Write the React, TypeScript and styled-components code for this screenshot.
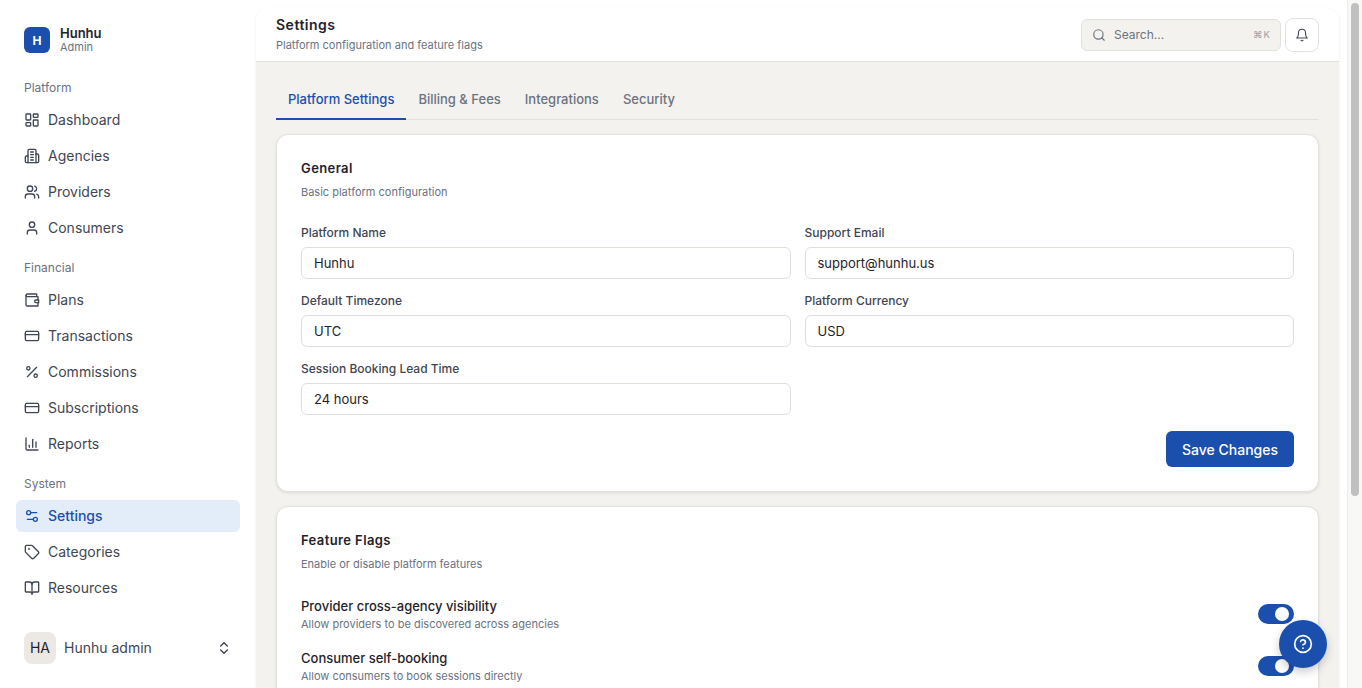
import React from 'react';
import styled, { createGlobalStyle } from 'styled-components';
import { LayoutDashboard, Users, User, CreditCard, Percent, ChartColumn, Settings2, Tag, BookOpen, ChevronsUpDown, Search, CircleHelp } from 'lucide-react';

const Global = createGlobalStyle`
  html, body { margin: 0; padding: 0; height: 688px; overflow: hidden; background: #fff; font-family: Inter, sans-serif; color: #1f2329; }
  #root { height: 688px; }
  * { box-sizing: border-box; }
`;
const Page = styled.div`display: flex; height: 688px; width: 1362px; overflow: hidden; position: relative;`;
const Sidebar = styled.aside`width: 256px; flex: none; background: #fff; padding: 16px 16px 0; display: flex; flex-direction: column; height: 688px;`;
const Brand = styled.div`display: flex; align-items: center; gap: 10px; padding: 8px; height: 48px; margin-bottom: 8px;`;
const Logo = styled.div`width: 26px; height: 26px; border-radius: 6px; background: #1b4fae; color: #fff; display: flex; align-items: center; justify-content: center; font-size: 12px; font-weight: 700;`;
const BrandText = styled.div`display: flex; flex-direction: column;`;
const BrandName = styled.div`font-size: 13px; font-weight: 600; line-height: 14px;`;
const BrandRole = styled.div`font-size: 11px; color: #6b7280; line-height: 14px;`;
const Group = styled.div`font-size: 12px; line-height: 16px; color: #6b7280; height: 32px; padding: 0 8px; display: flex; align-items: center;`;
const Item = styled.div<{ $active?: boolean }>`height: 32px; margin-bottom: 4px; padding: 0 8px; display: flex; align-items: center; gap: 8px; border-radius: 6px; font-size: 14px; line-height: 20px; width: 224px;
  background: ${p => p.$active ? '#e3edf9' : 'transparent'}; color: ${p => p.$active ? '#1b4fae' : '#3f4654'}; font-weight: ${p => p.$active ? 500 : 400};
  svg { width: 16px; height: 16px; stroke-width: 2; flex: none; }`;
const Section = styled.div`margin-bottom: 4px;`;
const UserRow = styled.div`margin-top: auto; margin-bottom: 24px; display: flex; align-items: center; gap: 8px; padding: 0 8px; height: 32px; font-size: 14px; line-height: 20px; color: #3f4654; svg { width: 16px; height: 16px; margin-left: auto; }`;
const Avatar = styled.div`width: 32px; height: 32px; border-radius: 8px; background: #ece9e4; color: #1f2329; display: flex; align-items: center; justify-content: center; font-size: 14px;`;
const Main = styled.main`flex: 1; min-width: 0; margin: 8px 23px 0 0; background: #f3f2ef; border-radius: 12px 12px 0 0; box-shadow: 0 1px 3px rgba(0,0,0,.08); display: flex; flex-direction: column; overflow: hidden;`;
const Header = styled.header`height: 54px; flex: none; background: #fff; border-bottom: 1px solid #e3e1dc; padding: 0 20px; display: flex; align-items: center; justify-content: space-between;`;
const Title = styled.div`font-size: 14px; font-weight: 600; line-height: 18px; margin-top: -2px; letter-spacing: .5px;`;
const Sub = styled.div`font-size: 11px; color: #6b7280; line-height: 14px; margin-top: 4px;`;
const HeaderTools = styled.div`display: flex; gap: 4px; align-items: center;`;
const SearchBox = styled.div`width: 200px; height: 32px; border: 1px solid #e3e1dc; background: #f3f2ef; border-radius: 6px; display: flex; align-items: center; gap: 8px; padding: 0 10px; font-size: 12px; color: #6b7280; svg { width: 14px; height: 14px; } span:last-child { margin: 0 -1px 0 auto; font-size: 9.5px; letter-spacing: 1px; color: #9aa0a9; }`;
const Bell2 = styled.div`width: 34px; height: 34px; background: #fff; border: 1px solid #e3e1dc; border-radius: 8px; display: flex; align-items: center; justify-content: center; color: #3f4654; svg { width: 14px; height: 14px; stroke-width: 1.75; }`;
const Content = styled.div`padding: 20px 20px 0; display: flex; flex-direction: column; gap: 14px;`;
const Tabs = styled.div`display: flex; height: 38px; border-bottom: 1px solid #e3e1dc;`;
const Tab = styled.div<{ $active?: boolean }>`padding: 8px 12px 0; height: 38px; line-height: 18px; font-size: 13px; font-weight: 500; color: ${p => p.$active ? '#1b4fae' : '#6b7280'}; border-bottom: ${p => p.$active ? '2px solid #1b4fae' : 'none'};`;
const Card = styled.section`background: #fff; border: 1px solid #e3e1dc; border-radius: 12px; padding: 24px; box-shadow: 0 1px 3px rgba(0,0,0,.1);`;
const CardTitle = styled.h2`margin: 0; font-size: 13px; font-weight: 600; line-height: 18px; letter-spacing: .4px;`;
const CardSub = styled.p`margin: 7px 0 24px; font-size: 11px; color: #6b7280; line-height: 16px;`;
const Form = styled.div`display: grid; grid-template-columns: 1fr 1fr; gap: 14px; padding-top: 1px;`;
const Field = styled.label`display: flex; flex-direction: column; gap: 7px; font-size: 12px; line-height: 15px; font-weight: 500; color: #3f4654;`;
const Input = styled.div`height: 32px; border: 1px solid #e0ded8; border-radius: 6px; background: #fff; padding: 0 12px; display: flex; align-items: center; font-size: 13px; font-weight: 400; color: #1f2329;`;
const Actions = styled.div`display: flex; justify-content: flex-end; margin-top: 16px;`;
const Save = styled.button`width: 128px; height: 36px; border: 0; border-radius: 6px; background: #1b4fae; color: #fff; font: 500 14px Inter, sans-serif;`;
const Flag = styled.div`display: flex; justify-content: space-between; align-items: center; height: 36px; margin-bottom: 16px;`;
const FlagName = styled.div`font-size: 13px; line-height: 20px; font-weight: 500; color: #1f2329;`;
const FlagSub = styled.div`font-size: 11px; line-height: 16px; color: #6b7280;`;
const Toggle = styled.div`width: 36px; height: 20px; border-radius: 10px; background: #1b4fae; padding: 3px 5px 3px 2px; display: flex; justify-content: flex-end; &::after { content: ''; width: 14px; height: 14px; border-radius: 50%; background: #fff; }`;
const Fab = styled.div`position: absolute; left: 1279px; top: 620px; width: 48px; height: 48px; border-radius: 50%; background: #1b4fae; color: #fff; display: flex; align-items: center; justify-content: center; box-shadow: 0 4px 10px rgba(0,0,0,.2); svg { width: 20px; height: 20px; }`;
const Scroll = styled.div`position: absolute; right: 0; top: 0; width: 15px; height: 688px; background: #f8f8f7; border-left: 1px solid #ececec; &::after { content: ''; position: absolute; left: 3px; top: 3px; width: 8px; height: 493px; border-radius: 4px; background: #c0c0c0; }`;

const Glyph = ({ children }: { children: React.ReactNode }) => (
  <svg viewBox="0 0 24 24" fill="none" stroke="currentColor" strokeLinecap="round" strokeLinejoin="round" strokeWidth="2">{children}</svg>
);
const Building = () => <Glyph>
  <path d="M6 22V4a2 2 0 0 1 2-2h8a2 2 0 0 1 2 2v18Z" /><path d="M6 12H4a2 2 0 0 0-2 2v6a2 2 0 0 0 2 2h2" /><path d="M18 9h2a2 2 0 0 1 2 2v9a2 2 0 0 1-2 2h-2" />
  <path d="M10 6h4" /><path d="M10 10h4" /><path d="M10 14h4" /><path d="M10 18h4" />
</Glyph>;
const WalletIcon = () => <Glyph>
  <path d="M21 12V7H5a2 2 0 0 1 0-4h14v4" /><path d="M3 5v14a2 2 0 0 0 2 2h16v-5" /><path d="M18 12a2 2 0 0 0 0 4h4v-4Z" />
</Glyph>;
const BellIcon = () => <Glyph>
  <path d="M6 8a6 6 0 0 1 12 0c0 7 3 9 3 9H3s3-2 3-9" /><path d="M10.3 21a1.94 1.94 0 0 0 3.4 0" />
</Glyph>;

const nav = [
  ['Platform', [['Dashboard', LayoutDashboard], ['Agencies', Building], ['Providers', Users], ['Consumers', User]]],
  ['Financial', [['Plans', WalletIcon], ['Transactions', CreditCard], ['Commissions', Percent], ['Subscriptions', CreditCard], ['Reports', ChartColumn]]],
  ['System', [['Settings', Settings2], ['Categories', Tag], ['Resources', BookOpen]]],
] as const;
const fields = [['Platform Name', 'Hunhu'], ['Support Email', 'support@hunhu.us'], ['Default Timezone', 'UTC'], ['Platform Currency', 'USD'], ['Session Booking Lead Time', '24 hours']];

export default function App() {
  return <Page><Global />
    <Sidebar>
      <Brand><Logo>H</Logo><BrandText><BrandName>Hunhu</BrandName><BrandRole>Admin</BrandRole></BrandText></Brand>
      {nav.map(([g, items]) => <Section key={g}><Group>{g}</Group>{items.map(([n, I]) => <Item key={n} $active={n === 'Settings'}><I />{n}</Item>)}</Section>)}
      <UserRow><Avatar>HA</Avatar>Hunhu admin<ChevronsUpDown /></UserRow>
    </Sidebar>
    <Main>
      <Header><div><Title>Settings</Title><Sub>Platform configuration and feature flags</Sub></div>
        <HeaderTools><SearchBox><Search /><span>Search...</span><span>⌘K</span></SearchBox><Bell2><BellIcon /></Bell2></HeaderTools></Header>
      <Content>
        <Tabs><Tab $active>Platform Settings</Tab><Tab>Billing &amp; Fees</Tab><Tab>Integrations</Tab><Tab>Security</Tab></Tabs>
        <Card><CardTitle>General</CardTitle><CardSub>Basic platform configuration</CardSub>
          <Form>{fields.map(([l, v]) => <Field key={l}>{l}<Input>{v}</Input></Field>)}</Form>
          <Actions><Save>Save Changes</Save></Actions></Card>
        <Card><CardTitle>Feature Flags</CardTitle><CardSub>Enable or disable platform features</CardSub>
          <Flag><div><FlagName>Provider cross-agency visibility</FlagName><FlagSub>Allow providers to be discovered across agencies</FlagSub></div><Toggle /></Flag>
          <Flag><div><FlagName>Consumer self-booking</FlagName><FlagSub>Allow consumers to book sessions directly</FlagSub></div><Toggle /></Flag></Card>
      </Content>
    </Main>
    <Scroll /><Fab><CircleHelp /></Fab>
  </Page>;
}
